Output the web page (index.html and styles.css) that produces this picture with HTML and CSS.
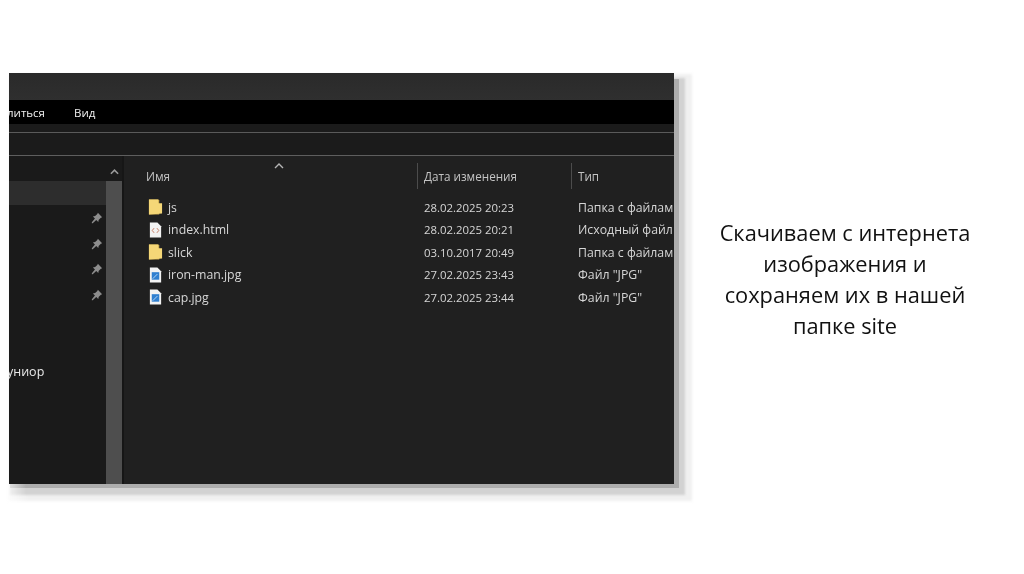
FILE: index.html
```html
<!DOCTYPE html>
<html lang="ru">
<head>
<meta charset="utf-8">
<title>Слайд</title>
<link rel="stylesheet" href="styles.css">
</head>
<body>
<main class="slide">
  <div class="shadow shadow-3"></div>
  <div class="shadow shadow-2"></div>
  <div class="shadow shadow-1"></div>
  <section class="window">
    <div class="titlebar"></div>
    <nav class="menubar">
      <span class="menu-clip">литься</span>
      <span class="menu-view">Вид</span>
    </nav>
    <div class="ribbon-gap"></div>
    <div class="address"></div>
    <div class="body">
      <aside class="sidebar">
        <div class="tree">
          <div class="tree-top"></div>
          <div class="tree-selected"></div>
          <div class="pins">
            <svg class="pin" viewBox="0 0 14 14"><path d="M8 1l5 5-1.500.6-2.600 2.600-.4 2.600-2.400-2.400L2 13l-1 0 0-1 3.600-4.400L2.200 5.200l2.600-.4L7.400 2.200z"/></svg>
            <svg class="pin" viewBox="0 0 14 14"><path d="M8 1l5 5-1.500.6-2.600 2.600-.4 2.600-2.400-2.400L2 13l-1 0 0-1 3.600-4.400L2.200 5.200l2.600-.4L7.400 2.200z"/></svg>
            <svg class="pin" viewBox="0 0 14 14"><path d="M8 1l5 5-1.500.6-2.600 2.600-.4 2.600-2.400-2.400L2 13l-1 0 0-1 3.600-4.400L2.200 5.200l2.600-.4L7.400 2.200z"/></svg>
            <svg class="pin" viewBox="0 0 14 14"><path d="M8 1l5 5-1.500.6-2.600 2.600-.4 2.600-2.400-2.400L2 13l-1 0 0-1 3.600-4.400L2.200 5.200l2.600-.4L7.400 2.200z"/></svg>
          </div>
          <div class="tree-label">униор</div>
        </div>
        <div class="scrollbar">
          <div class="scroll-top"><svg class="chev" viewBox="0 0 10 6"><path d="M1 5l4-4 4 4"/></svg></div>
          <div class="scroll-thumb"></div>
        </div>
        <div class="divider"></div>
      </aside>
      <div class="files">
        <svg class="sort-arrow" viewBox="0 0 10 6"><path d="M1 5l4-4 4 4"/></svg>
        <div class="row header">
          <div class="col name"><span class="head-name">Имя</span></div>
          <div class="col date sep">Дата изменения</div>
          <div class="col type sep">Тип</div>
        </div>
        <div class="rows">
          <div class="row item">
            <div class="col name">
              <svg class="ico" viewBox="0 0 16 18"><path class="folder-back" d="M1 1h10l1 1v15H1z"/><path class="folder-front" d="M1 1h10v4l4 0v11l-14 1z"/></svg>
              <span>js</span>
            </div>
            <div class="col date">28.02.2025 20:23</div>
            <div class="col type">Папка с файлами</div>
          </div>
          <div class="row item">
            <div class="col name">
              <svg class="ico" viewBox="0 0 16 18"><path class="page" d="M2 1h8l4 4v12H2z"/><path class="code" d="M6.500 7L4.500 9.500 6.500 12M9.500 7l2 2.500-2 2.500"/></svg>
              <span>index.html</span>
            </div>
            <div class="col date">28.02.2025 20:21</div>
            <div class="col type">Исходный файл</div>
          </div>
          <div class="row item">
            <div class="col name">
              <svg class="ico" viewBox="0 0 16 18"><path class="folder-back" d="M1 1h10l1 1v15H1z"/><path class="folder-front" d="M1 1h10v4l4 0v11l-14 1z"/></svg>
              <span>slick</span>
            </div>
            <div class="col date">03.10.2017 20:49</div>
            <div class="col type">Папка с файлами</div>
          </div>
          <div class="row item">
            <div class="col name">
              <svg class="ico" viewBox="0 0 16 18"><path class="page" d="M2 1h8l4 4v12H2z"/><rect class="photo" x="4" y="6" width="8" height="8"/><path class="photo-line" d="M5 13l5-5"/></svg>
              <span>iron-man.jpg</span>
            </div>
            <div class="col date">27.02.2025 23:43</div>
            <div class="col type">Файл "JPG"</div>
          </div>
          <div class="row item">
            <div class="col name">
              <svg class="ico" viewBox="0 0 16 18"><path class="page" d="M2 1h8l4 4v12H2z"/><rect class="photo" x="4" y="6" width="8" height="8"/><path class="photo-line" d="M5 13l5-5"/></svg>
              <span>cap.jpg</span>
            </div>
            <div class="col date">27.02.2025 23:44</div>
            <div class="col type">Файл "JPG"</div>
          </div>
        </div>
      </div>
    </div>
  </section>
  <p class="caption">Скачиваем с интернета<br>изображения и<br>сохраняем их в нашей<br>папке site</p>
</main>
</body>
</html>
```
FILE: styles.css
```css
* { box-sizing: border-box; }
html, body { margin: 0; padding: 0; background: #fff; }
.slide {
  position: relative;
  width: 1024px;
  height: 574px;
  overflow: hidden;
  background: #fff;
  font-family: "Open Sans", "Noto Sans", sans-serif;
}
.shadow { position: absolute; }
.shadow-3 { left: 8px; top: 74px; width: 684px; height: 427px; background: linear-gradient(90deg, #fcfcfc 0, #f0f0f0 20px); filter: blur(1.500px); }
.shadow-2 { left: 10px; top: 78px; width: 675px; height: 417px; background: linear-gradient(90deg, #efefef 0, #d2d2d2 16px); filter: blur(.8px); }
.shadow-1 { left: 10px; top: 79px; width: 669px; height: 409px; background: linear-gradient(90deg, #dedede 0, #adadad 16px); filter: blur(.6px); }
.window {
  position: absolute;
  left: 9px;
  top: 73px;
  width: 665px;
  height: 411px;
  display: flex;
  flex-direction: column;
  overflow: hidden;
  background: #1a1a1a;
  color: #e4e4e4;
}
.titlebar { height: 27px; flex: none; background: linear-gradient(#2a2a2a, #2f2f2f); }
.menubar {
  height: 24px;
  flex: none;
  background: #000;
  display: flex;
  align-items: center;
  font-size: 11.500px;
  color: #f0f0f0;
}
.menu-clip, .menu-view { filter: blur(.3px); }
.menu-clip { width: 67px; margin-left: -2px; white-space: nowrap; }
.ribbon-gap { height: 9px; flex: none; background: #1b1b1b; border-bottom: 1px solid #5a5a5a; }
.address { height: 23px; flex: none; background: #1b1b1b; border-bottom: 1px solid #5e5e5e; }
.body { flex: 1; display: flex; min-height: 0; }
.sidebar { width: 115px; flex: none; display: flex; }
.tree { width: 97px; position: relative; display: flex; flex-direction: column; background: #1a1a1a; }
.tree-top { height: 25px; flex: none; }
.tree-selected { height: 24px; flex: none; background: #2d2d2d; }
.pins {
  display: flex;
  flex-direction: column;
  align-items: flex-end;
  gap: 13.500px;
  padding: 7px 3px 0 0;
  filter: blur(.3px);
}
.pin { display: block; width: 12px; height: 12px; fill: #8d8d8d; }
.tree-label { font-size: 12.500px; color: #e8e8e8; margin-top: 62px; margin-left: -2px; white-space: nowrap; filter: blur(.3px); }
.scrollbar { width: 16px; display: flex; flex-direction: column; background: #1a1a1a; }
.scroll-top { height: 25px; flex: none; display: flex; justify-content: center; padding-top: 13px; }
.chev { display: block; width: 9px; height: 6px; fill: none; stroke: #9a9a9a; stroke-width: 1.800; }
.scroll-thumb { flex: 1; background: #4e4e4e; }
.divider { width: 2px; background: #161616; }
.files { flex: 1; position: relative; background: #202020; font-size: 12.300px; color: #d6d6d6; }
.sort-arrow {
  position: absolute;
  left: 150px;
  top: 7px;
  width: 10px;
  height: 6px;
  fill: none;
  stroke: #b5b5b5;
  stroke-width: 1.400;
}
.row { display: flex; align-items: center; }
.col { flex: none; white-space: nowrap; overflow: hidden; filter: blur(.3px); }
.name { width: 293px; display: flex; align-items: center; padding-left: 24px; gap: 5px; }
.date { width: 154px; padding-left: 7px; font-size: 11.400px; }
.type { width: 110px; padding-left: 7px; }
.sep { border-left: 1px solid #4c4c4c; height: 26px; line-height: 26px; }
.header { padding-top: 7px; height: 33px; color: #c4c4c4; }
.header .date { padding-left: 6px; font-size: 11.700px; }
.header .type { font-size: 11.700px; padding-left: 6px; }
.head-name { margin-left: -2px; font-size: 11.800px; }
.rows { padding-top: 7px; }
.item { height: 22.500px; }
.ico { display: block; width: 15px; height: 18px; flex: none; }
.folder-back { fill: #c9a94e; }
.folder-front { fill: #f5d777; }
.page { fill: #f2f2f2; }
.code { fill: none; stroke: #c4785e; stroke-width: 1; }
.photo { fill: #2f7fd0; }
.photo-line { fill: none; stroke: #b9d8f5; stroke-width: 1; }
.caption {
  position: absolute;
  left: 700px;
  top: 217px;
  width: 290px;
  margin: 0;
  text-align: center;
  font-size: 21.800px;
  line-height: 31px;
  color: #111;
  filter: blur(.25px);
}
```
